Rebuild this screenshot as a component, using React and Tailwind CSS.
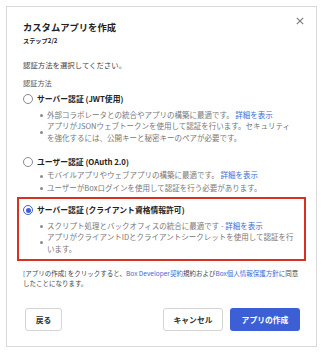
import React from 'react';

const font = { fontFamily: '"Noto Sans CJK JP", "Noto Sans", sans-serif' };

function Radio({ checked }) {
  return checked ? (
    <span className="flex items-center justify-center w-[10px] h-[10px] rounded-full border-[1.5px] border-[#3d5fd6] bg-white">
      <span className="w-[5px] h-[5px] rounded-full bg-[#3d5fd6]" />
    </span>
  ) : (
    <span className="w-[10px] h-[10px] rounded-full border border-[#8a8a8a] bg-white" />
  );
}

function Bullets({ items, className }) {
  return (
    <ul className={`pl-[17px] text-[7.5px] text-[#777] ${className}`}>
      {items.map((it, i) => (
        <li key={`b-${i}`} className="relative pl-[7px] whitespace-nowrap">
          <span className="absolute left-[0px] top-[45%] w-[3px] h-[3px] rounded-full bg-[#8a8a8a]" />
          {it}
        </li>
      ))}
    </ul>
  );
}

function Option({ label, checked, items, bulletClass }) {
  return (
    <div>
      <div className="flex items-center h-[12px] gap-[4px]">
        <Radio checked={checked} />
        <span className="text-[7.8px] font-bold text-[#222] whitespace-nowrap">{label}</span>
      </div>
      <Bullets items={items} className={bulletClass} />
    </div>
  );
}

const Link = ({ children }) => <span className="text-[#3b6bd6]">{children}</span>;

export default function App() {
  return (
    <div className="w-[324px] h-[356px] bg-white pt-[6px] pl-[6px]" style={font}>
      <div className="relative w-[311px] h-[341px] border border-[#d9d9d9] px-[16px]">
        <button className="absolute top-[9px] right-[11px] w-[10px] h-[10px] flex items-center justify-center">
          <svg width="8" height="8" viewBox="0 0 8 8">
            <path d="M0.8 0.8 L7.2 7.2 M7.2 0.8 L0.8 7.2" stroke="#7a7a7a" strokeWidth="1.1" />
          </svg>
        </button>

        <div className="pt-[12.5px] text-[9.3px] leading-[14px] font-bold text-[#222]">カスタムアプリを作成</div>
        <div className="mt-[3px] text-[6.2px] leading-[8px] font-bold text-[#222]">ステップ2/2</div>
        <div className="mt-[15px] text-[7.4px] leading-[10px] text-[#444]">認証方法を選択してください。</div>
        <div className="mt-[8px] text-[7.2px] leading-[10px] text-[#555]">認証方法</div>

        <div className="mt-[5px]">
          <Option
            label="サーバー認証 (JWT使用)"
            bulletClass="mt-[4.25px] leading-[11.5px]"
            items={[
              <>外部コラボレータとの統合やアプリの構築に最適です。 <Link>詳細を表示</Link></>,
              <>アプリがJSONウェブトークンを使用して認証を行います。セキュリティ<br />を強化するには、公開キーと秘密キーのペアが必要です。</>,
            ]}
          />
        </div>

        <div className="mt-[12.5px]">
          <Option
            label="ユーザー認証 (OAuth 2.0)"
            bulletClass="mt-[1.5px] leading-[12.5px]"
            items={[
              <>モバイルアプリやウェブアプリの構築に最適です。 <Link>詳細を表示</Link></>,
              <>ユーザーがBoxログインを使用して認証を行う必要があります。</>,
            ]}
          />
        </div>

        <div className="mt-[3px] -mx-[6px] border-2 border-[#d6321f] pl-[4px] pt-[5px] pb-[5px]">
          <Option
            checked
            label="サーバー認証 (クライアント資格情報許可)"
            bulletClass="mt-[3.25px] leading-[11.5px]"
            items={[
              <>スクリプト処理とバックオフィスの統合に最適です - <Link>詳細を表示</Link></>,
              <>アプリがクライアントIDとクライアントシークレットを使用して認証を行<br />います。</>,
            ]}
          />
        </div>

        <div className="mt-[7px] text-[6.5px] leading-[10px] text-[#444] whitespace-nowrap">
          [アプリの作成] をクリックすると、<Link>Box Developer契約</Link>規約および<Link>Box個人情報保護方針</Link>に同意
          <br />
          したことになります。
        </div>

        <div className="mt-[20px] flex items-center pl-[2px]">
          <button className="w-[37px] h-[23px] rounded-[3px] border border-[#d4d4d4] bg-white text-[7.8px] font-bold text-[#333]">戻る</button>
          <div className="flex-1" />
          <button className="w-[60px] h-[23px] rounded-[3px] border border-[#d4d4d4] bg-white text-[7.8px] font-bold text-[#333]">キャンセル</button>
          <button className="ml-[7px] w-[70px] h-[23px] rounded-[3px] bg-[#3d5fd6] text-[7.8px] font-bold text-white">アプリの作成</button>
        </div>
      </div>
    </div>
  );
}
